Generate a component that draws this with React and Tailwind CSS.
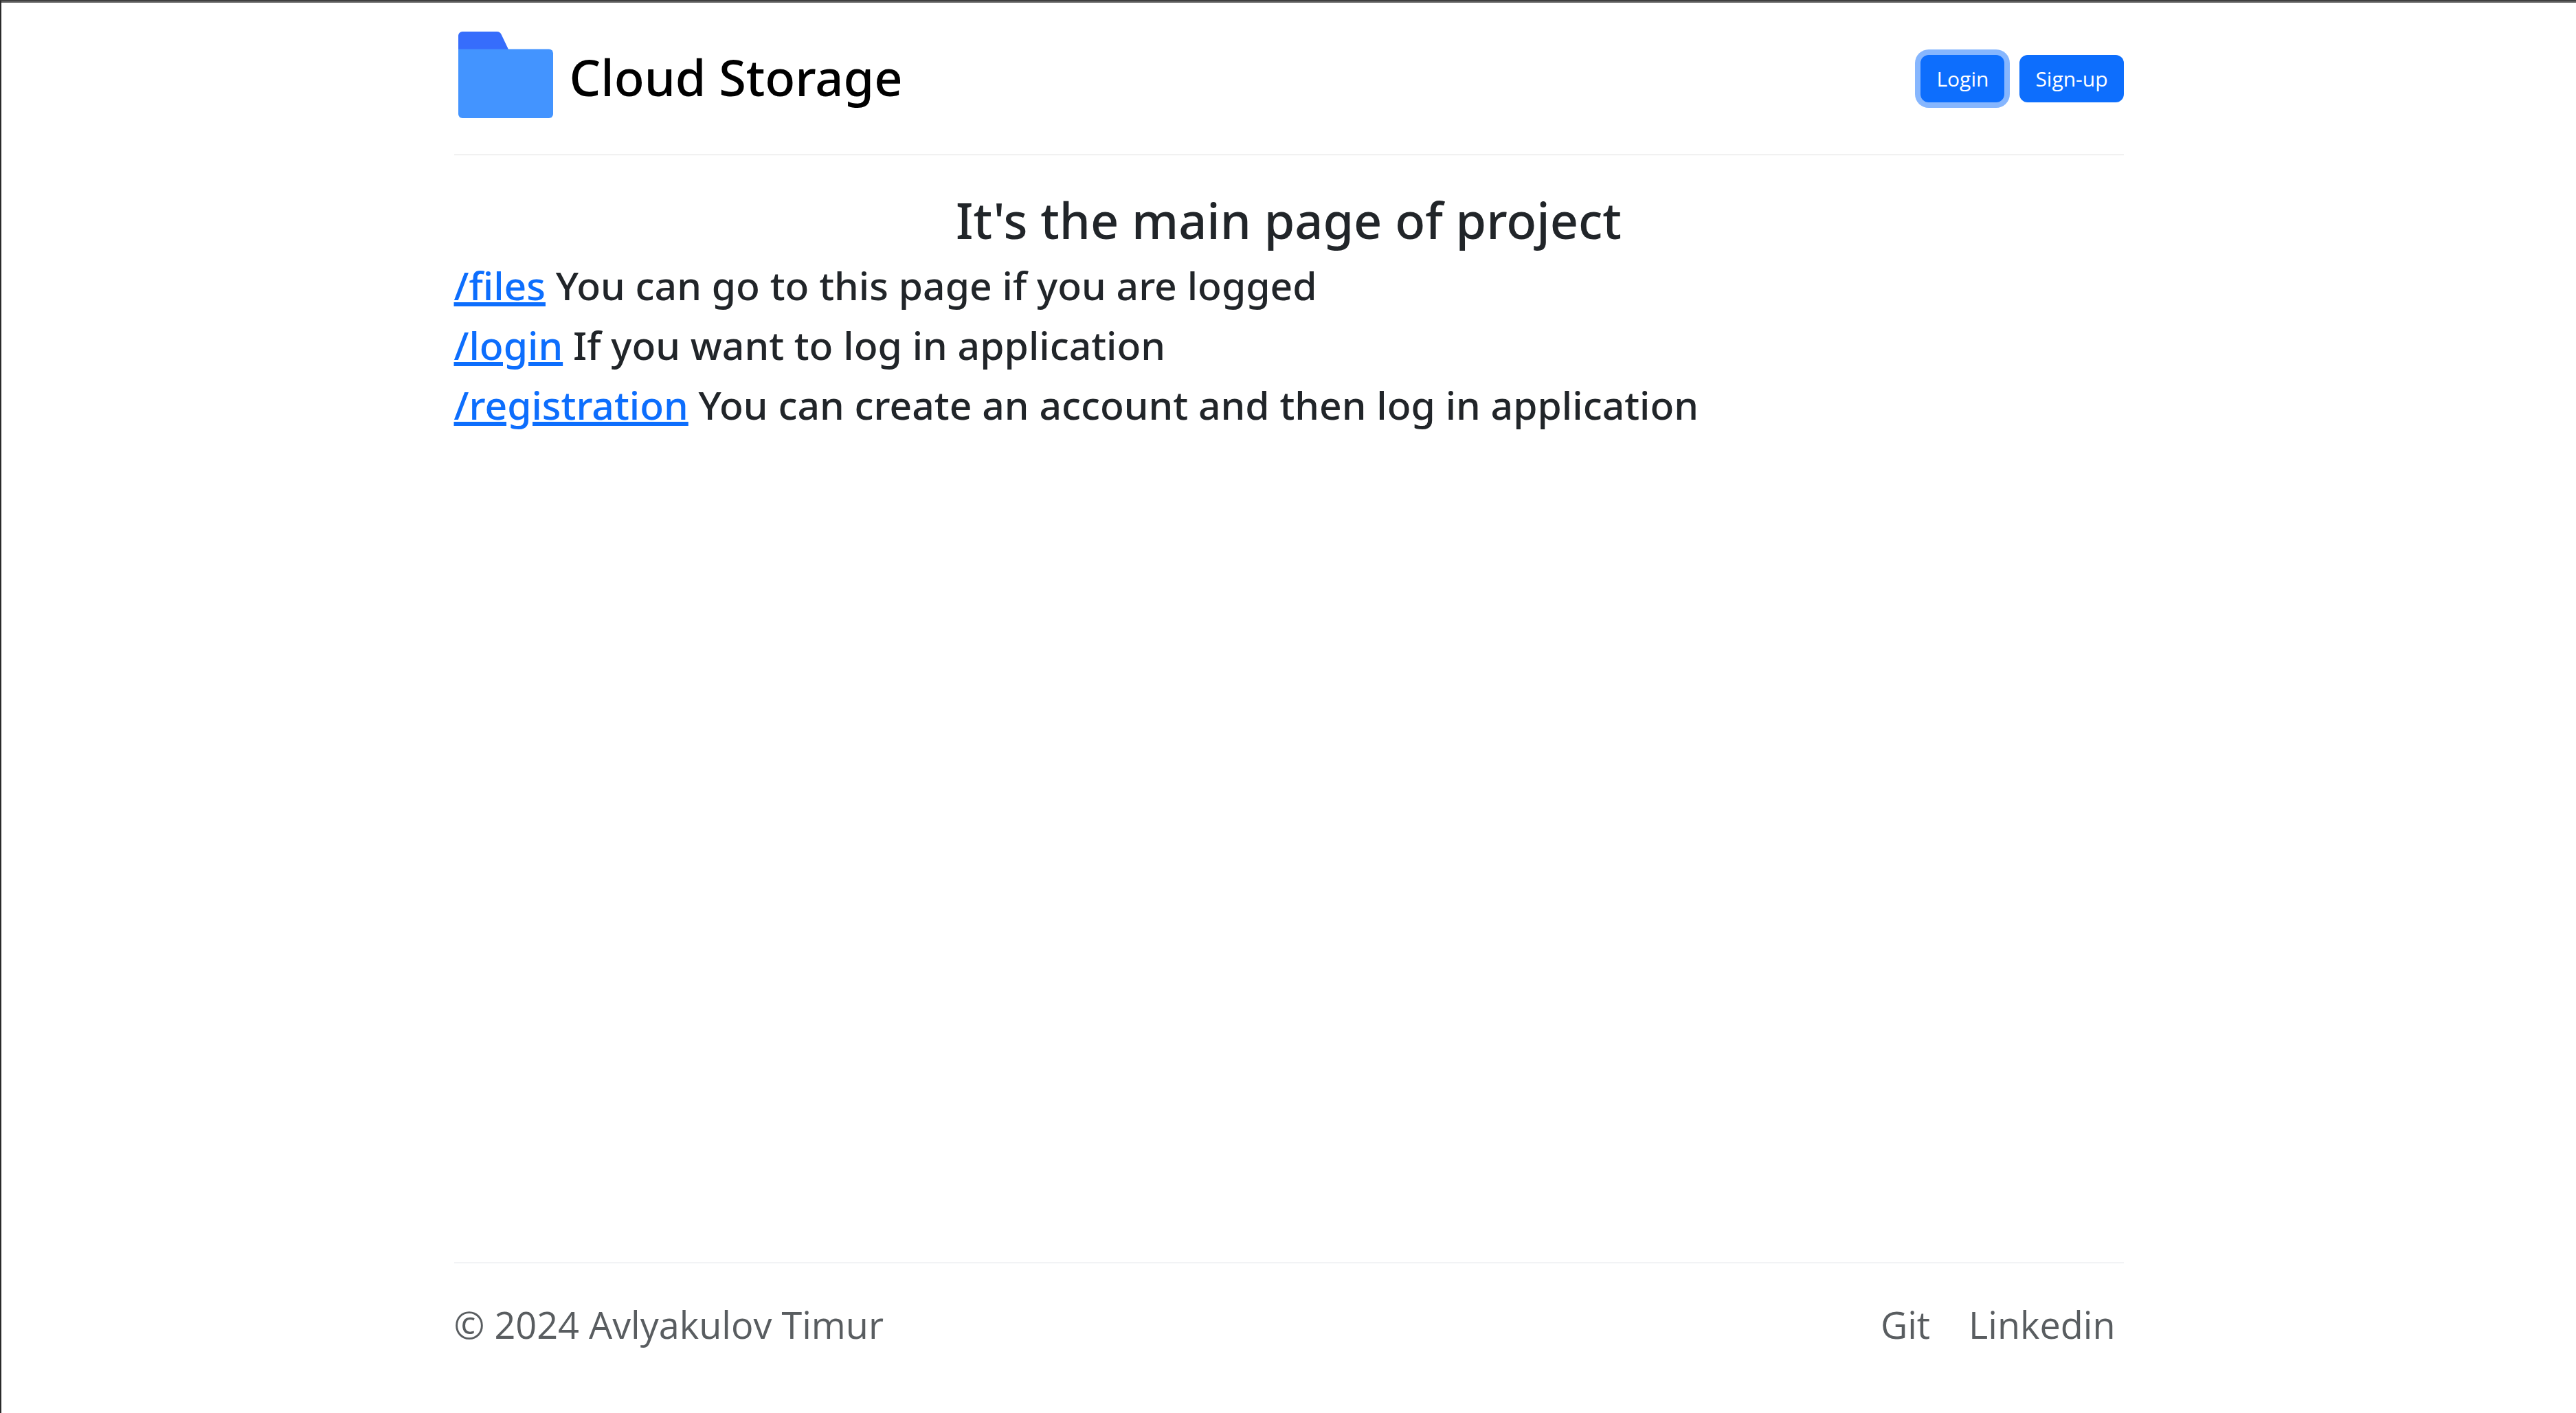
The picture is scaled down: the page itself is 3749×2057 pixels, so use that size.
const ROUTES = [
  { path: '/files', text: 'You can go to this page if you are logged' },
  { path: '/login', text: 'If you want to log in application' },
  { path: '/registration', text: 'You can create an account and then log in application' },
];

function FolderIcon() {
  return (
    <svg className="h-[132px] w-[150px] shrink-0" viewBox="0 0 150 132" aria-hidden="true">
      <path d="M6 30V6a6 6 0 0 1 6-6h50q5 0 7 5l10 21v4z" fill="#366dfc" />
      <path d="M6 25.500H138a6 6 0 0 1 6 6V120a6 6 0 0 1-6 6H12a6 6 0 0 1-6-6z" fill="#4394ff" />
    </svg>
  );
}

function Header() {
  return (
    <header className="flex flex-wrap items-center justify-between border-b border-[#dedede] pt-[42px] pb-[43px]">
      <a href="/" className="flex items-center gap-[18px] pb-1 text-black">
        <FolderIcon />
        <span className="text-[72px] leading-[86px] font-medium">Cloud Storage</span>
      </a>
      <div className="flex gap-[22px] font-['Open_Sans',sans-serif] text-[30px] leading-[45px] text-white">
        <button type="button" className="rounded-xl bg-[#0d6efd] px-[23px] py-3 ring-8 ring-[#86b6fe]">
          Login
        </button>
        <button type="button" className="rounded-xl bg-[#0d6efd] px-[23px] py-3">
          Sign-up
        </button>
      </div>
    </header>
  );
}

function Footer() {
  return (
    <footer className="mt-auto flex flex-wrap items-center justify-between border-t border-[#dee2e6] pt-12 pb-[88px] font-['Open_Sans',sans-serif] text-[54px] leading-[82px] text-[#595d60]">
      <p>© 2024 Avlyakulov Timur</p>
      <nav className="flex gap-14 pr-3">
        <a href="#git">Git</a>
        <a href="#linkedin">Linkedin</a>
      </nav>
    </footer>
  );
}

export default function App() {
  return (
    <div className="flex min-h-screen flex-col border-t-2 border-l-2 border-t-[#404040] border-l-[#2b2b2b] bg-white font-['Noto_Sans',sans-serif] text-[#212529]">
      <div className="h-0.5 bg-[#6b6b6b]" />
      <div className="mx-auto flex w-full max-w-[2430px] grow flex-col">
        <Header />
        <main className="pt-[51px]">
          <h1 className="mb-[9px] text-center text-[72px] leading-[86px] font-medium">
            It's the main page of project
          </h1>
          {ROUTES.map(({ path, text }) => (
            <h2 key={path} className="text-[57px] leading-[87px] font-medium">
              <a
                href={path}
                className="text-[#0d6efd] underline decoration-[6px] underline-offset-[3px]"
              >
                {path}
              </a>{' '}
              {text}
            </h2>
          ))}
        </main>
        <Footer />
      </div>
    </div>
  );
}
